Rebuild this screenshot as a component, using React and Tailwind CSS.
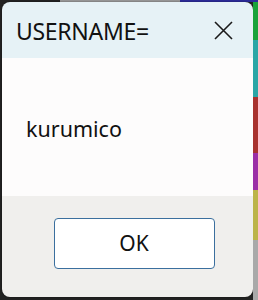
import React from "react";

const font = { fontFamily: '"Noto Sans", "Open Sans", sans-serif' };

const CloseIcon = () => (
  <svg width="21" height="21" viewBox="0 0 21 21" fill="none">
    <path d="M2 2L19 19M19 2L2 19" stroke="#1a1a1a" strokeWidth="1.6" />
  </svg>
);

const App = () => {
  return (
    <div className="w-[258px] h-[300px] bg-[#222222] flex flex-col overflow-hidden" style={font}>
      {/* top edge of whatever is behind */}
      <div className="h-[2px] flex shrink-0">
        <div className="w-[60px] bg-[#222222]" />
        <div className="w-[120px] bg-[#9a9a9a]" />
        <div className="flex-1 bg-[#2c2c9a]" />
      </div>

      <div className="flex flex-1 min-h-0">
        <div className="w-[2px] shrink-0" />

        {/* dialog */}
        <div className="w-[251px] h-[295px] shrink-0 rounded-[8px] overflow-hidden flex flex-col shadow-[0_0_2px_rgba(0,0,0,0.5)]">
          <div className="h-[56px] bg-[#e6f2f6] flex items-center justify-between pl-[14px] pr-[19px]">
            <span className="text-[23px] text-[#111111] tracking-[-0.3px] pt-[2px]">USERNAME=</span>
            <CloseIcon />
          </div>
          <div className="h-[138px] bg-[#fdfcfc] flex items-center pl-[24px]">
            <span className="text-[21.5px] text-[#111111] pt-[4px]">kurumico</span>
          </div>
          <div className="flex-1 bg-[#f0efed] flex items-start justify-center pt-[22px] pl-[13px]">
            <button className="w-[161px] h-[51px] bg-white border border-[#3b6f9e] rounded-[4px] text-[21px] text-[#111111] flex items-center justify-center">
              OK
            </button>
          </div>
        </div>

        {/* strip of the window behind */}
        <div className="flex-1 flex flex-col">
          <div className="h-[38px] bg-[#1aa33a]" />
          <div className="h-[57px] bg-[#2aa6a6]" />
          <div className="h-[56px] bg-[#a8322e]" />
          <div className="h-[37px] bg-[#9b2fa6]" />
          <div className="h-[50px] bg-[#bcb44a]" />
          <div className="flex-1 bg-[#a9a9a9]" />
        </div>
      </div>
    </div>
  );
};

export default App;
